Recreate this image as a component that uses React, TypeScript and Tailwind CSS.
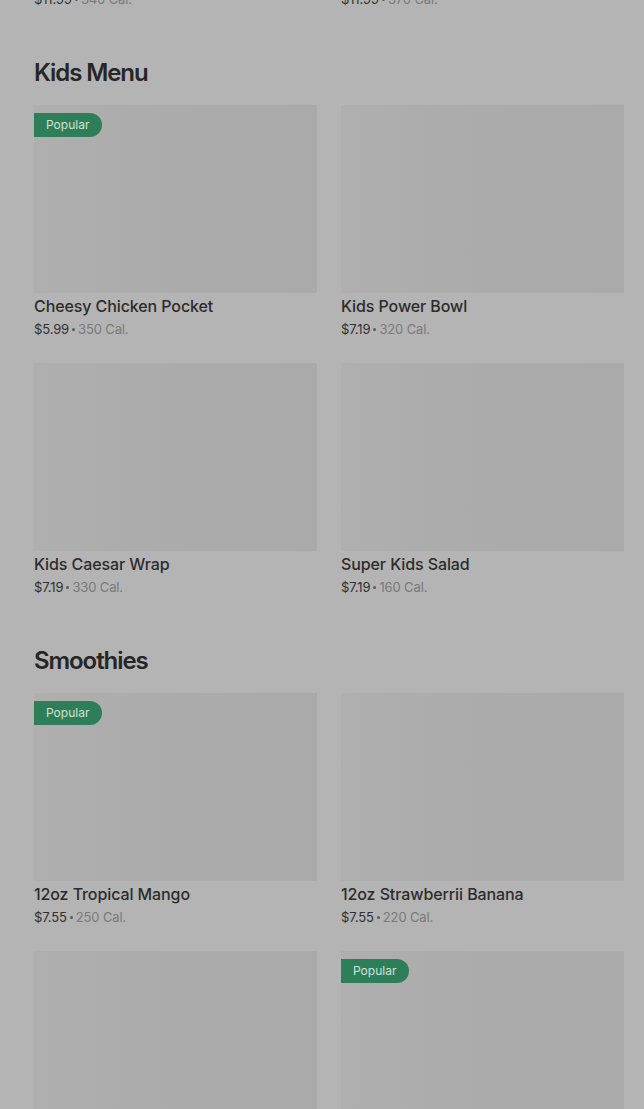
type Item = {
  name: string;
  price: string;
  cal: string;
  popular?: boolean;
};

const sections: { title: string; items: Item[] }[] = [
  {
    title: "Kids Menu",
    items: [
      { name: "Cheesy Chicken Pocket", price: "$5.99", cal: "350 Cal.", popular: true },
      { name: "Kids Power Bowl", price: "$7.19", cal: "320 Cal." },
      { name: "Kids Caesar Wrap", price: "$7.19", cal: "330 Cal." },
      { name: "Super Kids Salad", price: "$7.19", cal: "160 Cal." },
    ],
  },
  {
    title: "Smoothies",
    items: [
      { name: "12oz Tropical Mango", price: "$7.55", cal: "250 Cal.", popular: true },
      { name: "12oz Strawberrii Banana", price: "$7.55", cal: "220 Cal." },
      { name: "12oz Berry Blast", price: "$7.55", cal: "230 Cal." },
      { name: "12oz Green Machine", price: "$7.55", cal: "210 Cal.", popular: true },
    ],
  },
];

function PriceLine({ price, cal }: { price: string; cal: string }) {
  return (
    <p className="flex h-5 items-center text-[13px] leading-5 tracking-[-0.01em] text-[#7a7a7a]">
      <span className="text-[#303030]">{price}</span>
      <span className="mx-[3px] h-[3px] w-[3px] rounded-full bg-[#5a5a5a]" />
      <span>{cal}</span>
    </p>
  );
}

function MenuCard({ item }: { item: Item }) {
  return (
    <div className="flex flex-col">
      <div className="relative h-[188px] bg-gradient-to-r from-[#afafaf] via-[#ababab] to-[#aaaaaa]">
        {item.popular && (
          <span className="absolute left-0 top-2 flex h-6 items-center rounded-r-full bg-[#2f7e5a] pl-3 pr-[13px] text-[12px] text-[#cfe2d6]">
            Popular
          </span>
        )}
      </div>
      <p className="mt-[1px] text-[16px] font-medium leading-6 tracking-[-0.006em] text-[#2c2c2c]">
        {item.name}
      </p>
      <div className="mt-[1px]">
        <PriceLine price={item.price} cal={item.cal} />
      </div>
    </div>
  );
}

export default function App() {
  return (
    <div className="h-[1109px] overflow-hidden bg-[#b4b4b4] font-['Inter',sans-serif]">
      <div className="-mt-[11px] pl-[34px] pr-[20px]">
        <div className="grid grid-cols-2 gap-x-6">
          <PriceLine price="$11.99" cal="340 Cal." />
          <PriceLine price="$11.99" cal="370 Cal." />
        </div>

        {sections.map((section) => (
          <section key={section.title} className="pt-[48px]">
            <h2 className="mb-[16px] text-[24px] font-semibold leading-8 tracking-[-0.045em] text-[#262626]">
              {section.title}
            </h2>
            <div className="grid grid-cols-2 gap-x-6 gap-y-6">
              {section.items.map((item) => (
                <MenuCard key={item.name} item={item} />
              ))}
            </div>
          </section>
        ))}
      </div>
    </div>
  );
}
